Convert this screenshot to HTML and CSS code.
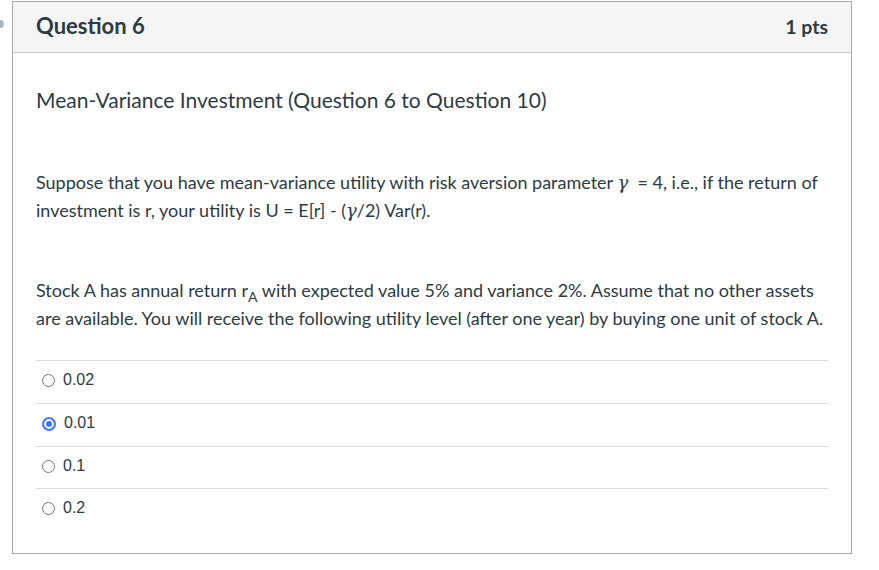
FILE: index.html
```html
<!DOCTYPE html>
<html>
<head>
<meta charset="utf-8">
<link rel="stylesheet" href="styles.css">
</head>
<body>
<span class="marker"></span>
<div class="card">
  <div class="header">
    <span class="qtitle">Question 6</span>
    <span class="pts">1 pts</span>
  </div>
  <div class="body">
    <p class="topic">Mean-Variance Investment (Question 6 to Question 10)</p>
    <p class="para">Suppose that you have mean-variance utility with risk aversion parameter <span class="gamma">γ</span>&nbsp; = 4, i.e., if the return of investment is r, your utility is U = E[r] - (<span class="gamma">γ</span>/2) Var(r).</p>
    <p class="para para2">Stock A has annual return r<sub>A</sub> with expected value 5% and variance 2%. Assume that no other assets are available. You will receive the following utility level (after one year) by buying one unit of stock A.</p>
    <div class="answers">
      <label class="answer"><span class="radio"></span><span class="atext">0.02</span></label>
      <label class="answer"><span class="radio checked"></span><span class="atext">0.01</span></label>
      <label class="answer"><span class="radio"></span><span class="atext">0.1</span></label>
      <label class="answer"><span class="radio"></span><span class="atext">0.2</span></label>
    </div>
  </div>
</div>
</body>
</html>
```
FILE: styles.css
```css
html, body { margin: 0; padding: 0; background: #fff; }
body { font-family: Lato, "Noto Sans", sans-serif; color: #2d3b45; position: relative; }
.marker {
  position: absolute; left: -4px; top: 20px; width: 8px; height: 8px;
  border-radius: 50%; background: #a9b3bb;
}
.card {
  margin: 1px 0 0 12px;
  width: 838px;
  height: 551px;
  border: 1px solid #a8a8a8;
  box-sizing: content-box;
}
.header {
  height: 51px;
  background: #f5f5f5;
  border-bottom: 1px solid #c7cdd1;
  display: flex;
  align-items: center;
  justify-content: space-between;
  padding: 0 23px 0 23px;
  box-sizing: border-box;
}
.qtitle { font-size: 22px; font-weight: 700; position: relative; top: -2px; }
.pts { font-size: 19.5px; font-weight: 700; position: relative; top: -1px; }
.body { padding: 0 23px; }
.topic { margin: 34px 0 0; font-size: 21px; line-height: 26px; }
.para { margin: 56px 0 0; font-size: 18px; line-height: 27.5px; }
.para2 { margin-top: 53px; }
.gamma { font-family: "DejaVu Serif", serif; font-style: italic; font-size: 18px; }
sub { font-size: 14px; line-height: 0; vertical-align: -5px; }
.answers { margin-top: 28px; }
.answer {
  display: flex; align-items: center; height: 43px;
  border-top: 1px solid #dcdcdc;
  padding-left: 6px; padding-bottom: 4px;
  box-sizing: border-box;
}
.answer:nth-child(3) { height: 42px; }
.radio {
  width: 13px; height: 13px; border: 1px solid #767676; border-radius: 50%;
  box-sizing: border-box; margin-right: 8px; margin-top: 1px; background: #fff;
}
.radio.checked { border: 2px solid #4a7bf3; box-shadow: inset 0 0 0 2px #fff; background: #3b78f0; width: 14px; height: 14px; }
.atext { font-family: "Liberation Sans", Arial, sans-serif; font-size: 16px; color: #2d3b45; }
```
